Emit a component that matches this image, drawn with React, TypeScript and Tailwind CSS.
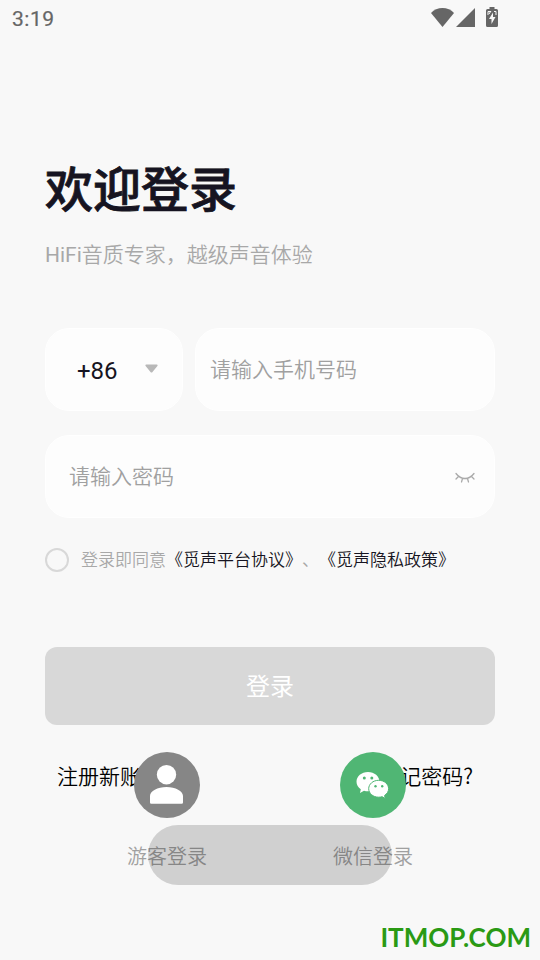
import { ReactNode } from 'react';

interface SocialLoginProps {
  label: string;
  color: string;
  children: ReactNode;
}

function StatusBar() {
  return (
    <header className="flex h-9 items-center justify-between pl-3 pr-[42px] text-[#666]">
      <span className="text-[21px] font-normal leading-6 tracking-[0.5px] pt-0.5 [-webkit-text-stroke:0.2px_#666]">3:19</span>
      <svg width="68" height="20" viewBox="430 7 68 20" fill="currentColor" className="mb-0.5">
        <path d="M442.5 27 431 13c3-3.2 7-5 11.500-5s8.500 1.800 11.500 5z" />
        <path d="M456 27 475 8v19z" />
        <path d="M489.500 7h5v2h2a1.500 1.500 0 0 1 1.500 1.500v15a1.500 1.500 0 0 1-1.500 1.500h-9a1.500 1.500 0 0 1-1.500-1.500v-15a1.500 1.500 0 0 1 1.500-1.500h2z" />
        <path d="M493 12.500 489 19h2.500v5l4-7H493z" fill="#f8f8f8" />
        <path d="M488 15v-3.500h3M491 11l-2 3M494 11.500h2V15" stroke="#f8f8f8" fill="none" />
      </svg>
    </header>
  );
}

function SocialLogin({ label, color, children }: SocialLoginProps) {
  return (
    <div className="flex w-20 flex-col items-center">
      <div className={`flex h-[66px] w-[66px] items-center justify-center rounded-full ${color}`}>
        {children}
      </div>
      <span className="mt-6 whitespace-nowrap text-[20px] leading-[30px] text-[#a0a0a0]">{label}</span>
    </div>
  );
}

function GuestIcon() {
  return (
    <svg width="66" height="66" viewBox="0 0 66 66" fill="#fff">
      <circle cx="32.500" cy="22.700" r="9.700" />
      <path d="M16 50.500V44c0-5 7.500-9 16.500-9S49 39 49 44v6.500a1.300 1.300 0 0 1-1.300 1.300H17.300A1.300 1.300 0 0 1 16 50.500z" />
    </svg>
  );
}

function WechatIcon() {
  return (
    <svg width="66" height="66" viewBox="0 0 66 66">
      <path d="M28 20c-6.500 0-11.500 4.300-11.500 9.700 0 3.100 1.700 5.800 4.300 7.600L20 41l4-2.300c1.300.4 2.600.6 4 .6 6.400 0 11.500-4.300 11.500-9.600S34.400 20 28 20z" fill="#fff" />
      <path d="M38.700 28.300c-5.700 0-10 3.800-10 8.400s4.300 8.500 10 8.500c1.300 0 2.400-.2 3.500-.5l3 1.900-.6-3.200c2.500-1.600 4-4 4-6.700 0-4.600-4.300-8.400-9.900-8.400z" fill="#fff" stroke="#50b674" strokeWidth="1" />
      <g fill="#50b674">
        <circle cx="24.300" cy="26" r="1.500" />
        <circle cx="31.800" cy="26" r="1.500" />
        <circle cx="35.500" cy="34.200" r="1.200" />
        <circle cx="42.200" cy="34.200" r="1.200" />
      </g>
    </svg>
  );
}

export default function App() {
  return (
    <div className="relative h-[960px] w-[540px] overflow-hidden bg-[#f8f8f8] font-['Roboto','Noto_Sans_CJK_SC',sans-serif] font-[350] [text-spacing-trim:space-all]">
      <StatusBar />

      <main className="px-[45px] pt-[119px]">
        <h1 className="text-[48px] font-medium leading-[72px] text-[#161421] [-webkit-text-stroke:0.8px_#161421]">欢迎登录</h1>
        <p className="mt-3 text-[21px] leading-[32px] text-[#a8a8a8]">
          <span className="font-normal">HiFi</span>音质专家，越级声音体验
        </p>

        <div className="mt-[57px] flex gap-3">
          <div className="flex h-[83px] w-[138px] items-center justify-between rounded-3xl border border-white bg-[#fdfdfd] pl-[31px] pr-6">
            <span className="pt-0.5 text-[24px] font-normal leading-8 text-[#161421]">+86</span>
            <svg width="13" height="9" viewBox="0 0 13 9" className="mb-0.5" fill="#b8b8b8">
              <path d="M1.300.5h10.400c.9 0 1.200.9.700 1.500L7.500 7.900a1.300 1.300 0 0 1-2 0L.6 2C.1 1.400.4.5 1.300.5z" />
            </svg>
          </div>
          <div className="flex h-[83px] flex-1 items-center rounded-3xl border border-white bg-[#fdfdfd] pl-[14px] pt-0.5 text-[21px] text-[#a0a0a0]">
            请输入手机号码
          </div>
        </div>

        <div className="mt-6 flex h-[83px] items-center justify-between rounded-3xl border border-white bg-[#fdfdfd] pl-[23px] pr-[19px] pt-0.5 text-[21px] text-[#a0a0a0]">
          请输入密码
          <svg width="20" height="12" viewBox="0 0 20 12" fill="none" stroke="#aaa" strokeWidth="1.300" strokeLinecap="round">
            <path d="M1 1.500c2 2.600 5 5 9 5s7-2.400 9-5M3.500 4.500 1 7M7.500 6.500l-1 3.500M12.500 6.500l1 3.500M16.500 4.500 19 7" />
          </svg>
        </div>

        <div className="mt-[29px] flex h-[26px] items-center">
          <span className="h-6 w-6 shrink-0 rounded-full border-2 border-[#d8d8d8]" />
          <p className="ml-3 whitespace-nowrap text-[17px] leading-[26px] text-[#a8a8a8]">
            登录即同意<span className="text-[#161421]">《觅声平台协议》</span>、<span className="text-[#161421]">《觅声隐私政策》</span>
          </p>
        </div>

        <button className="mt-[74px] block h-[78px] w-full rounded-xl bg-[#d8d8d8] pt-0.5 text-[24px] font-normal text-white">登录</button>

        <div className="mt-[34px] flex justify-between pl-3 pr-[22px] font-['Noto_Sans_CJK_SC',sans-serif] text-[21px] leading-8 text-black">
          <span>注册新账号</span>
          <span>忘记密码?</span>
        </div>
      </main>

      <div className="absolute left-[127px] top-[752px] flex w-[286px] justify-between">
        <SocialLogin label="游客登录" color="bg-[#868686]">
          <GuestIcon />
        </SocialLogin>
        <SocialLogin label="微信登录" color="bg-[#50b674]">
          <WechatIcon />
        </SocialLogin>
      </div>

      {/* toast */}
      <div className="absolute left-[148px] top-[825px] h-[60px] w-[244px] rounded-full bg-black/16" />

      <span className="absolute right-[9px] top-[919px] font-['Lato',sans-serif] text-[26px] font-bold leading-9 text-[#2a9a14]">ITMOP.COM</span>
    </div>
  );
}
